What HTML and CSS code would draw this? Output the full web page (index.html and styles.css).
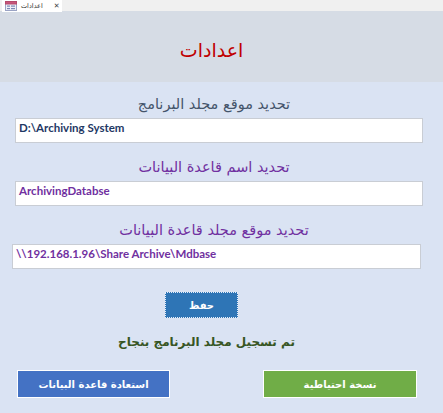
FILE: index.html
```html
<!DOCTYPE html>
<html lang="ar">
<head>
<meta charset="utf-8">
<title>اعدادات</title>
<link rel="stylesheet" href="styles.css">
</head>
<body>
<div class="tabbar">
  <div class="tab">
    <svg class="tab-icon" width="12" height="10" viewBox="0 0 12 10">
      <rect x="0.5" y="0.5" width="11" height="9" fill="#eef0f6" stroke="#9aa3c4"/>
      <rect x="0.5" y="0.5" width="11" height="2.5" fill="#c8557a" stroke="#b44a6c"/>
      <rect x="2" y="4.5" width="3" height="1.2" fill="#7d87b5"/>
      <rect x="6" y="4.5" width="4" height="1.2" fill="#7d87b5"/>
      <rect x="2" y="7" width="3" height="1.2" fill="#7d87b5"/>
      <rect x="6" y="7" width="4" height="1.2" fill="#7d87b5"/>
    </svg>
    <span class="tab-title">اعدادات</span>
    <span class="tab-close">✕</span>
  </div>
</div>
<div class="header">
  <h1 class="title">اعدادات</h1>
</div>
<div class="content">
  <div class="label label-slate">تحديد موقع مجلد البرنامج</div>
  <div class="field field-a"><span class="val val-navy">D:\Archiving System</span></div>
  <div class="label label-purple">تحديد اسم قاعدة البيانات</div>
  <div class="field field-a"><span class="val val-purple">ArchivingDatabse</span></div>
  <div class="label label-purple">تحديد موقع مجلد قاعدة البيانات</div>
  <div class="field field-b"><span class="val val-purple">\\192.168.1.96\Share Archive\Mdbase</span></div>
  <div class="save-row"><button class="btn btn-save">حفظ</button></div>
  <div class="message">تم تسجيل مجلد البرنامج بنجاح</div>
  <div class="actions">
    <button class="btn btn-restore">استعادة قاعدة البيانات</button>
    <button class="btn btn-backup">نسخة احتياطية</button>
  </div>
</div>
</body>
</html>
```
FILE: styles.css
```css
* { box-sizing: border-box; }
html, body {
  margin: 0;
  padding: 0;
  width: 443px;
  height: 413px;
  overflow: hidden;
  background: #dae3f3;
  font-family: "DejaVu Sans", "Noto Sans", sans-serif;
}
.tabbar {
  height: 12px;
  background: #f0f0f0;
  border-bottom: 1px solid #e2e2e2;
  display: flex;
  padding-left: 2px;
}
.tab {
  width: 60px;
  height: 12px;
  background: #ffffff;
  display: flex;
  align-items: center;
  padding-left: 3px;
  gap: 4px;
}
.tab-icon { flex: none; }
.tab-title {
  font-size: 6.5px;
  color: #333;
  direction: rtl;
  line-height: 12px;
}
.tab-close {
  font-size: 7px;
  color: #444;
  margin-left: 7px;
  line-height: 12px;
}
.header {
  height: 71px;
  background: #d6dce5;
  display: flex;
  align-items: center;
  justify-content: center;
  margin-top: -1px;
  padding-right: 20px;
}
.title {
  margin: 0;
  font-weight: normal;
  font-size: 19px;
  color: #c00000;
  direction: rtl;
  padding-top: 6px;
}
.content {
  display: flex;
  flex-direction: column;
  padding-top: 10px;
}
.label {
  text-align: center;
  direction: rtl;
  font-size: 14.5px;
  line-height: 24px;
  height: 26px;
  padding-right: 15px;
}
.label-slate { color: #44546a; }
.label-purple { color: #7030a0; margin-top: 12px; }
.field {
  height: 25px;
  background: #ffffff;
  border: 1px solid #c9cdd4;
  padding: 2px 3px;
}
.field-a { margin: 0 20px 0 15px; }
.field-b { margin: 0 22px 0 12px; }
.val {
  font-family: "Lato", "Open Sans", sans-serif;
  font-weight: bold;
  font-size: 11.5px;
  line-height: 14px;
  display: block;
}
.val-navy { color: #1f3864; }
.val-purple { color: #7030a0; }
.btn {
  border: 1px solid #ffffff;
  color: #ffffff;
  font-family: "DejaVu Sans", sans-serif;
  font-weight: bold;
  font-size: 10px;
  direction: rtl;
  padding: 0;
  cursor: pointer;
}
.save-row {
  display: flex;
  justify-content: flex-start;
  margin-top: 23px;
  padding-left: 165px;
}
.btn-save {
  width: 73px;
  height: 26px;
  background: #2e75b6;
  border: 1px dotted #e8eef8;
}
.message {
  text-align: center;
  direction: rtl;
  color: #375623;
  font-weight: bold;
  font-size: 12px;
  line-height: 20px;
  margin-top: 14px;
  padding-right: 30px;
}
.actions {
  display: flex;
  justify-content: space-between;
  margin-top: 18px;
  padding: 0 26px 0 17px;
}
.btn-restore {
  width: 153px;
  height: 28px;
  background: #4472c4;
}
.btn-backup {
  width: 154px;
  height: 28px;
  background: #70ad47;
}
```
